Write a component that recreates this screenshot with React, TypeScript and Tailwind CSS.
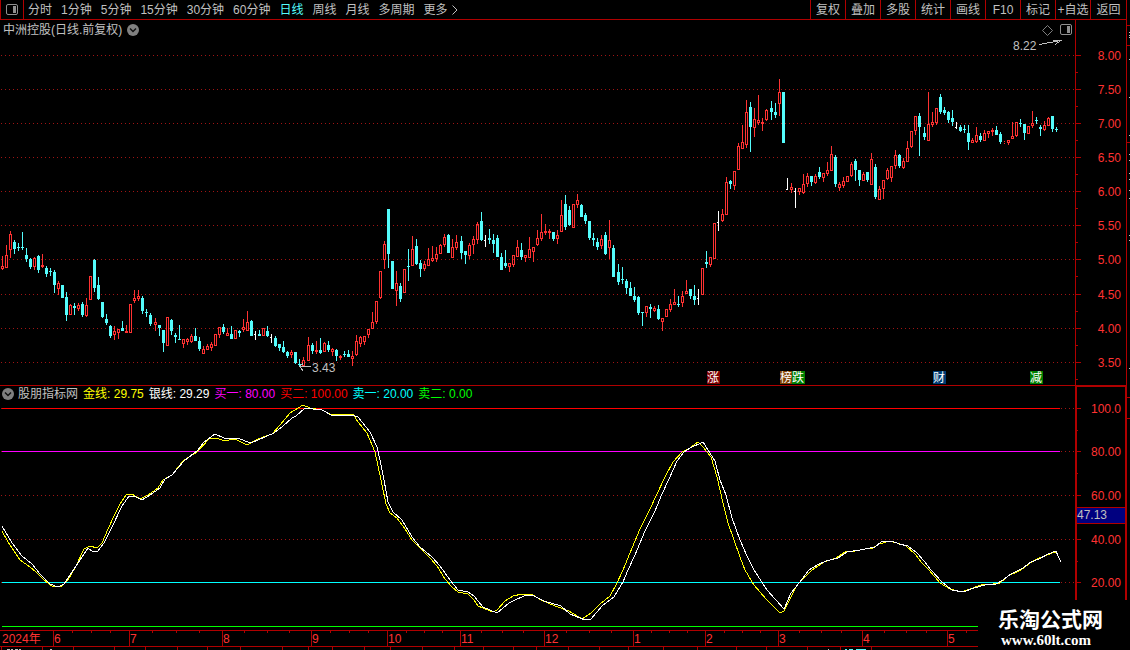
import React from 'react';
import { clsx } from 'clsx';

const periods = ['分时', '1分钟', '5分钟', '15分钟', '30分钟', '60分钟', '日线', '周线', '月线', '多周期'];
const tools = ['复权', '叠加', '多股', '统计', '画线', 'F10', '标记', '+自选', '返回'];

const legend = [
  { name: '金线', value: '29.75', color: 'text-[#ffff00]' },
  { name: '银线', value: '29.29', color: 'text-white' },
  { name: '买一', value: '80.00', color: 'text-[#ff00ff]' },
  { name: '买二', value: '100.00', color: 'text-[#ff0000]' },
  { name: '卖一', value: '20.00', color: 'text-[#00ffff]' },
  { name: '卖二', value: '0.00', color: 'text-[#00ff00]' },
];

const RED = '#b00000';
const UP = '#ff3232';
const DOWN = '#54fcfc';

// first chart row of each plot
const PRICE_TOP = 38;
const OSC_TOP = 402;

const priceGrid = [
  { label: '8.00', y: 55 },
  { label: '7.50', y: 89 },
  { label: '7.00', y: 123 },
  { label: '6.50', y: 157 },
  { label: '6.00', y: 191 },
  { label: '5.50', y: 225 },
  { label: '5.00', y: 259 },
  { label: '4.50', y: 294 },
  { label: '4.00', y: 328 },
  { label: '3.50', y: 362 },
];

const oscGrid = [
  { label: '100.0', y: 408 },
  { label: '80.00', y: 451 },
  { label: '60.00', y: 495 },
  { label: '40.00', y: 539 },
  { label: '20.00', y: 582 },
];

const levels = [
  { y: 408, color: '#ff0000' },
  { y: 451, color: '#ff00ff' },
  { y: 582, color: '#00ffff' },
  { y: 626, color: '#00ff00' },
];

const badges = [
  { text: '涨', x: 707, color: '#800000' },
  { text: '榜', x: 780, color: '#804000' },
  { text: '跌', x: 792, color: '#008000' },
  { text: '财', x: 933, color: '#003c74' },
  { text: '减', x: 1030, color: '#008000' },
];

const months = [
  { label: '6', x: 53 },
  { label: '7', x: 129 },
  { label: '8', x: 222 },
  { label: '9', x: 311 },
  { label: '10', x: 387 },
  { label: '11', x: 460 },
  { label: '12', x: 544 },
  { label: '1', x: 633 },
  { label: '2', x: 705 },
  { label: '3', x: 778 },
  { label: '4', x: 862 },
  { label: '5', x: 947 },
];

const weekTicks = [
  72, 91, 110, 152, 176, 199, 244, 267, 289, 330, 349, 368, 406, 424, 442, 481, 502, 523, 566, 589, 611, 651, 669, 687,
  724, 742, 760, 799, 821, 841, 884, 906, 926, 966,
];

const footTicks = [
  1, 42, 73, 114, 145, 177, 207, 240, 282, 308, 332, 364, 390, 422, 454, 483, 513, 536, 568, 599, 628, 663, 697, 736, 766,
  807, 840, 871,
];

// u/d/f = up, down, flat, followed by high, body top, body bottom, low
const candleData = `
u256,266,269,270 u245,255,268,268 u231,234,250,258 d240,242,249,254 d243,247,248,251 d232,247,248,250
d248,255,259,262 d258,259,267,269 u257,258,267,270 d255,256,270,273 u254,265,267,268 d266,268,274,277
d268,271,272,276 d270,272,285,293 u281,283,289,295 d285,285,298,298 d292,297,315,321 u304,305,315,315
d303,306,308,315 u303,305,309,311 d302,304,315,317 u298,305,316,317 u276,276,300,300 d259,260,288,292
d277,285,299,300 d302,302,317,318 d314,319,323,325 d325,326,336,338 u326,331,335,340 u329,329,333,339
d321,328,331,331 u325,331,333,333 u304,304,333,333 u290,298,301,303 u290,296,299,301 d296,298,311,314
d309,312,313,317 d313,315,324,326 u318,322,325,331 d325,325,328,336 d330,330,343,352 u317,317,346,346
d319,320,331,335 d333,335,337,343 d325,339,340,340 u339,339,344,348 u338,339,342,345 u334,336,342,343
d328,336,341,341 d337,341,349,351 u346,349,354,354 u344,346,350,350 u342,344,348,351 u334,334,346,346
u327,327,335,338 d324,327,332,334 u328,333,336,336 d326,334,339,339 u330,330,339,339 d330,331,333,337
u319,327,330,332 u311,322,331,331 d320,321,336,336 f331,334,335,340 d330,334,336,336 u328,328,336,336
d326,331,336,337 f334,337,338,343 d336,338,346,347 d344,344,348,351 d341,347,352,353 d351,352,356,358
u350,352,355,358 d352,352,363,364 d359,364,365,367 u357,360,366,366 u337,345,361,361 d343,345,351,354
u341,350,352,354 d338,350,353,354 u342,343,352,352 d341,345,350,352 u348,349,352,356 d349,350,356,361
u355,356,358,360 d351,354,355,357 d350,354,357,357 u351,356,359,366 u335,341,355,356 u336,337,344,347
u336,336,342,345 u329,329,335,338 u312,322,329,329 u301,301,322,324 u271,271,298,299 u241,244,260,269
d209,209,254,268 d261,261,289,289 u271,283,291,306 d283,286,299,302 u269,269,293,293 d249,266,267,281
u236,249,266,266 d239,246,264,265 d260,263,269,277 u261,264,269,271 u248,259,266,266 u246,258,261,262
u247,254,259,262 u244,245,254,254 u234,237,245,247 d234,235,253,253 u239,247,258,258 u235,242,248,250
d236,241,253,259 d251,251,255,264 u243,245,256,259 u236,239,245,254 u222,224,240,244 d212,221,240,241
f235,240,241,247 d229,238,240,244 d234,240,244,253 d235,238,257,257 d253,257,270,270 d250,263,266,268
u263,263,267,272 u255,255,265,267 u240,247,257,257 d243,250,257,260 u255,255,258,262 u237,249,258,258
u247,247,252,262 u230,238,245,246 u214,232,239,241 u224,231,233,235 u229,231,233,239 d232,232,239,241
u230,235,239,244 u200,215,232,232 d195,204,227,230 d206,210,225,226 u204,204,228,228 u194,200,205,208
d204,205,217,217 d213,215,221,224 d221,221,238,240 d233,238,240,246 d238,242,247,250 u235,239,246,249
d232,235,254,255 u220,240,248,259 d245,248,277,277 d264,272,282,285 d267,279,280,284 d279,281,288,294
d282,288,296,296 d287,296,300,302 d296,297,313,315 d312,312,313,326 u306,306,313,317 d304,307,309,318
u306,308,311,312 d305,309,319,320 u318,318,322,331 u309,309,317,317 u299,304,310,312 u289,302,305,305
d296,304,305,307 u291,296,303,307 u280,291,294,294 d289,289,296,299 d285,296,300,305 f289,298,299,305
u268,268,295,295 d251,262,264,268 u257,257,265,267 u223,223,259,259 f211,222,223,231 u209,214,221,222
u177,182,215,215 d180,181,184,189 u171,171,186,190 u143,146,170,170 u125,142,149,149 u100,112,145,148
d102,107,127,152 u108,119,128,137 u95,120,123,125 u118,122,124,131 u109,110,120,121 d101,108,112,120
d103,112,115,118 u79,92,104,116 d92,92,143,143 f178,189,190,190 u183,187,190,193 f188,191,192,208
u188,188,192,195 u174,184,193,194 u173,176,184,187 d176,176,182,186 u174,176,183,184 d167,172,177,179
u173,173,178,182 u162,170,174,176 u146,154,171,171 d155,157,184,187 u182,184,188,191 u177,181,186,188
u176,176,182,182 u162,164,176,177 d159,161,170,181 d170,170,180,186 u172,174,181,181 d172,172,180,182
u153,159,185,185 d164,167,197,199 u186,189,200,200 u180,180,189,199 u168,170,179,180 u166,166,178,182
u150,155,166,169 d154,155,166,168 u158,161,168,169 u141,148,162,162 u131,131,147,148 u116,116,131,135
d113,116,127,156 d127,133,137,140 u92,124,141,141 u112,122,125,127 u108,108,123,125 d94,97,112,114
d107,110,113,115 d111,112,120,123 d110,118,122,126 f122,127,128,129 d125,127,131,132 d125,129,130,133
d125,133,142,150 u138,140,143,143 u127,135,142,143 d133,136,140,142 u130,133,141,141 u131,131,134,138
u128,130,132,136 d126,130,135,135 d132,134,142,144 u141,142,143,144 u140,140,143,145 u122,136,139,139
u122,122,136,137 d119,123,124,127 d124,124,133,140 u126,126,134,134 u111,123,126,128 d117,120,121,124
d125,127,129,136 u121,125,130,131 u117,118,126,126 d116,116,129,132 d127,129,130,132
`;

// the day pitch is a hair over 4px, so these days start one pixel later
const pitchBreaks = [38, 76, 114, 153, 191, 229];

const candles = candleData
  .trim()
  .split(/\s+/)
  .map((item, i) => {
    const [high, top, bottom, low] = item.slice(1).split(',').map(Number);
    const x = 2 + i * 4 + pitchBreaks.filter((b) => i >= b).length;
    return { kind: item[0], x, high, top, bottom, low };
  });

const goldLine =
  '2,531 8,542 20,560 30,567 36,572 44,580 52,586 62,586 68,580 76,566 84,549 90,546 97,548 102,543 108,529 114,516 120,504 126,495 132,494 140,499 148,495 158,488 163,480 172,475 183,461 197,452 210,438 217,438 224,441 235,439 247,445 258,439 272,434 280,425 290,413 303,405 310,408 322,410 332,415 338,414 353,414 358,422 367,433 375,452 381,480 386,504 390,513 397,518 405,529 412,540 421,549 430,558 437,566 445,579 452,587 458,592 468,594 474,600 478,606 493,612 497,610 505,601 513,596 522,594 533,595 541,600 555,606 569,611 582,619 591,613 600,604 610,596 617,583 623,570 630,553 640,529 650,509 657,494 665,477 673,462 682,452 690,448 698,442 703,447 711,457 717,477 723,503 728,523 734,540 740,557 745,570 754,585 766,599 780,613 784,611 797,585 812,570 824,562 836,558 845,552 855,551 865,549 873,548 879,544 890,541 897,543 906,546 915,554 922,563 929,570 940,583 950,589 961,592 970,589 981,585 993,584 1000,583 1008,576 1021,570 1030,563 1037,559 1047,555 1055,552 1057,554 1061,562';

const silverLine =
  '2,526 12,543 22,556 32,564 40,574 50,584 58,587 64,584 72,572 80,560 88,548 93,552 98,551 104,543 112,527 122,506 129,496 136,497 142,500 150,495 160,488 165,479 172,475 184,461 198,450 204,442 215,434 224,438 237,438 251,443 267,436 274,433 283,426 292,418 296,416 305,408 313,409 322,410 333,416 352,415 358,417 370,432 377,447 380,460 384,480 388,502 393,512 402,520 412,537 420,547 432,557 440,566 450,580 458,590 468,592 474,596 483,607 497,613 509,603 515,600 524,596 532,595 544,601 561,606 570,614 585,620 591,619 602,606 614,597 623,582 628,570 635,555 645,531 655,511 662,494 669,479 677,461 684,452 690,448 703,442 708,450 715,461 720,480 726,495 732,518 740,540 747,556 754,570 767,590 784,609 791,593 799,583 809,570 817,565 826,561 838,558 847,552 860,550 875,547 881,542 892,541 899,544 908,546 917,553 924,561 931,570 942,582 952,590 963,592 974,588 985,585 996,584 1003,580 1011,574 1023,568 1031,562 1039,559 1048,554 1056,551 1058,556 1061,562';

const PanelIcon = () => (
  <svg className="w-3 h-3 shrink-0" viewBox="0 0 12 12" fill="none" aria-hidden="true">
    <rect x="0.5" y="0.5" width="11" height="10" rx="1.5" stroke="#909090" />
    <rect x="7" y="2" width="3" height="7" fill="#909090" />
  </svg>
);

const RoundChevron = () => (
  <svg className="w-3 h-3 shrink-0" viewBox="0 0 12 12" aria-hidden="true">
    <circle cx="6" cy="6" r="6" fill="#808080" />
    <path d="M3 4.5 L6 7.5 L9 4.5" fill="none" stroke="#101010" strokeWidth="1.5" />
  </svg>
);

const GridRow: React.FC<{ y: number }> = ({ y }) => (
  <line x1="1" x2="100%" y1={y + 0.5} y2={y + 0.5} stroke="#a01414" strokeDasharray="1 3" />
);

const Candle: React.FC<{ candle: (typeof candles)[number] }> = ({ candle }) => {
  const { kind, x, high, top, bottom, low } = candle;
  if (kind === 'u') {
    return (
      <g fill={UP}>
        <rect x={x} y={high} width="1" height={top - high} />
        <rect x={x - 0.5} y={top + 0.5} width="2" height={bottom - top - 1} fill="none" stroke={UP} />
        <rect x={x} y={bottom} width="1" height={low - bottom} />
      </g>
    );
  }
  return (
    <g fill={kind === 'd' ? DOWN : '#ffffff'}>
      <rect x={x} y={high} width="1" height={low - high} />
      <rect x={x - 1} y={top} width={kind === 'd' ? 3 : 1} height={bottom - top} />
    </g>
  );
};

const TopBar = () => (
  <header className="flex h-5 items-stretch border-b border-[#b00000] text-[#c0c0c0]">
    <button className="flex w-6 items-center justify-center border-x border-[#b00000]" aria-label="侧栏">
      <PanelIcon />
    </button>
    <nav className="flex flex-1 items-center gap-[9px] pl-1 whitespace-nowrap">
      {periods.map((p) => (
        <button key={p} className={clsx(p === '日线' && 'text-[#54fcfc]')}>
          {p}
        </button>
      ))}
      <button className="flex items-center gap-1">
        更多
        <svg className="w-1.5 h-2.5" viewBox="0 0 6 10" fill="none" stroke="#c0c0c0" aria-hidden="true">
          <path d="M0.5 0.5 L5 5 L0.5 9.5" />
        </svg>
      </button>
    </nav>
    <div className="flex whitespace-nowrap">
      {tools.map((t) => (
        <button key={t} className="w-[35px] border-l border-[#b00000] last:w-9">
          {t}
        </button>
      ))}
    </div>
  </header>
);

const PricePanel = () => (
  <section className="flex border-b border-[#b00000]">
    <div className="min-w-0 flex-1">
      <div className="flex h-[18px] items-center gap-[5px] pt-0.5 pl-[3px] pr-[3px] text-[#c0c0c0]">
        <h1>中洲控股(日线.前复权)</h1>
        <button aria-label="展开">
          <RoundChevron />
        </button>
        <svg className="ml-auto w-[11px] h-[11px]" viewBox="0 0 11 11" fill="none" stroke="#808080" aria-hidden="true">
          <path d="M5.5 0.5 L10.5 5.5 L5.5 10.5 L0.5 5.5 Z" />
        </svg>
        <button className="ml-0.5" aria-label="右栏">
          <PanelIcon />
        </button>
      </div>
      <svg className="block h-[347px] w-full" shapeRendering="crispEdges">
        <g transform={`translate(0 ${-PRICE_TOP})`}>
          {priceGrid.map((g) => (
            <GridRow key={g.label} y={g.y} />
          ))}
          {candles.map((c) => (
            <Candle key={c.x} candle={c} />
          ))}
          <g stroke="#c0c0c0" fill="none">
            <path d="M1039 44.5 L1061 40.5 M1053 40.5 L1061 40.5 L1055 44.5" />
            <path d="M299 366.5 H311 M303 363.5 L299.5 366.5 L303 370.5" />
          </g>
          <g fill="#c0c0c0">
            <text x="1013" y="50">8.22</text>
            <text x="312" y="372">3.43</text>
          </g>
          {badges.map((b) => (
            <g key={b.text}>
              <rect x={b.x} y="371" width="13" height="13" fill={b.color} />
              <text x={b.x} y="382" fill="#ffffff">
                {b.text}
              </text>
            </g>
          ))}
        </g>
      </svg>
    </div>
    <svg className="block w-[51px] border-l border-[#b00000]" shapeRendering="crispEdges">
      <g transform="translate(0 -20)">
        {priceGrid.map((g) => (
          <g key={g.label}>
            <rect y={g.y} width="5" height="1" fill={RED} />
            <rect y={g.y + 17} width="2" height="1" fill={RED} />
            <text x="45" y={g.y + 5} textAnchor="end" fill={UP}>
              {g.label}
            </text>
          </g>
        ))}
      </g>
    </svg>
  </section>
);

const OscillatorPanel = () => (
  <section className="flex">
    <div className="min-w-0 flex-1">
      <div className="flex h-4 items-center gap-[5px] pl-0.5 text-[#c0c0c0] whitespace-nowrap">
        <button className="-mr-px" aria-label="指标菜单">
          <RoundChevron />
        </button>
        <span>股朋指标网</span>
        {legend.map((l) => (
          <span key={l.name} className={l.color}>
            {l.name}: {l.value}
          </span>
        ))}
      </div>
      <svg className="block h-[228px] w-full" shapeRendering="crispEdges">
        <g transform={`translate(0 ${-OSC_TOP})`}>
          {oscGrid.map((g) => (
            <GridRow key={g.label} y={g.y} />
          ))}
          {levels.map((l) => (
            <rect key={l.y} x="2" y={l.y} width="1058" height="1" fill={l.color} />
          ))}
          <polyline points={goldLine} fill="none" stroke="#ffff00" />
          <polyline points={silverLine} fill="none" stroke="#ffffff" />
        </g>
      </svg>
    </div>
    <svg
      className="block w-[51px] border-t border-r border-l-2 border-[#b00000]"
      shapeRendering="crispEdges"
    >
      <g transform="translate(0 -387)">
        {oscGrid.map((g) => (
          <g key={g.label}>
            <rect y={g.y} width="4" height="1" fill={RED} />
            <rect y={g.y + 22} width="1" height="1" fill={RED} />
            <text x="44" y={g.y + 5} textAnchor="end" fill={UP}>
              {g.label}
            </text>
          </g>
        ))}
        <rect y="507" width="49" height="17" fill={RED} />
        <rect y="508" width="49" height="15" fill="#000080" />
        <text y="519" fill="#c0c0c0">47.13</text>
      </g>
    </svg>
  </section>
);

const TimeAxis = () => (
  <footer>
    <svg className="block h-[17px] w-full border-y border-[#b00000]" shapeRendering="crispEdges">
      <text x="2" y="12" fill={UP}>2024年</text>
      {months.map((m) => (
        <g key={m.x}>
          <rect x={m.x} width="1" height="15" fill={RED} />
          <text x={m.x + 1} y="12" fill={UP}>
            {m.label}
          </text>
        </g>
      ))}
      {weekTicks.map((x) => (
        <rect key={x} x={x} width="1" height="2" fill={RED} />
      ))}
    </svg>
    <svg className="block h-[3px] w-full" shapeRendering="crispEdges" aria-hidden="true">
      {footTicks.map((x) => (
        <rect key={x} x={x} width="1" height="3" fill={RED} />
      ))}
      <path d="M7 2.5 h3 m1 0 h2 m2 0 h3 m1 0 h2 m29 0 h2 M828 2.5 h1" stroke="#c0c0c0" />
      <path d="M845 2.5 h2 m2 0 h4 m3 0 h10" stroke={DOWN} />
    </svg>
  </footer>
);

// sliver of the neighbouring quote panel
const SideStrip = () => (
  <svg className="block w-1 shrink-0 border-l border-[#b00000]" shapeRendering="crispEdges" aria-hidden="true">
    {[25, 45, 142, 397, 418].map((y) => (
      <rect key={y} y={y} width="3" height="1" fill={RED} />
    ))}
    {[32, 35, 37, 59, 97, 135, 154, 160, 173, 179, 190, 198, 235, 240, 368].map((y) => (
      <rect key={y} x="2" y={y} width="1" height="1" fill="#c0c0c0" />
    ))}
  </svg>
);

export default function App() {
  return (
    <div className="relative flex w-full overflow-hidden bg-black font-['Liberation_Sans','Noto_Sans_CJK_SC',sans-serif] text-[12px] leading-4">
      <main className="min-w-0 flex-1">
        <TopBar />
        <PricePanel />
        <OscillatorPanel />
        <TimeAxis />
      </main>
      <SideStrip />
      <div className="absolute right-0 bottom-0 flex h-[50px] w-[152px] flex-col bg-black pt-2 pl-5 font-bold text-white">
        <span className="text-[21px] leading-6">乐淘公式网</span>
        <a
          href="http://www.60lt.com"
          className="pl-[3px] font-['Liberation_Serif',serif] text-[15px] leading-4"
        >
          www.60lt.com
        </a>
      </div>
    </div>
  );
}
